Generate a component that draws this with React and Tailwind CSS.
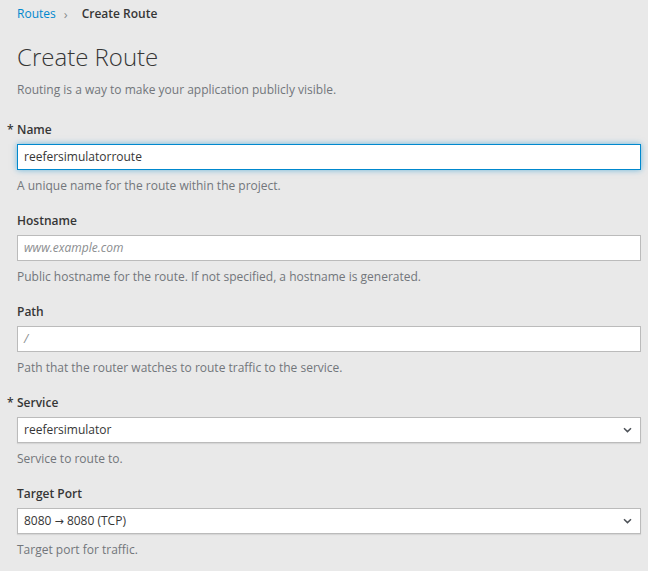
import React from "react";

function Field({ label, required, children, help, first }) {
  return (
    <div className={"flex flex-col " + (first ? "" : "pt-[15px]")}>
      <div className="pt-[2px] h-[20px] leading-[18px] text-[12px] font-semibold text-[#363636] flex">
        {required && <span className="-ml-[10px] w-[10px]">*</span>}
        <span>{label}</span>
      </div>
      <div className="pt-[5px]">{children}</div>
      <div className="pt-[7px] h-[25px] leading-[18px] text-[12px] text-[#72767b]">{help}</div>
    </div>
  );
}

function Chevron() {
  return (
    <svg width="9" height="6" viewBox="0 0 9 6" className="text-[#4d5258]">
      <path d="M1 1.2 L4.5 4.6 L8 1.2" fill="none" stroke="currentColor" strokeWidth="1.5" />
    </svg>
  );
}

export default function App() {
  return (
    <div
      className="min-h-[571px] bg-[#e9e9e9] pl-[17px] pr-[7px] text-[#363636]"
      style={{ fontFamily: '"Open Sans", "Liberation Sans", sans-serif' }}
    >
      <div className="pt-[5px] h-[23px] flex items-center text-[12px] leading-[18px]">
        <span className="text-[#0088ce]">Routes</span>
        <span className="ml-[8px] mr-[14px] text-[#8b8d8f] text-[13px]">›</span>
        <span className="font-semibold text-[#363636]">Create Route</span>
      </div>
      <h1 className="mt-[19px] text-[24px] leading-[30px] font-light text-[#363636]">Create Route</h1>
      <div className="mt-[9px] text-[12px] leading-[18px] text-[#72767b]">
        Routing is a way to make your application publicly visible.
      </div>
      <div className="mt-[20px] flex flex-col">
        <Field label="Name" required first help="A unique name for the route within the project.">
          <div className="h-[26px] bg-white border border-[#0088ce] shadow-[0_0_6px_rgba(0,136,206,0.55)] px-[6px] flex items-center text-[12px] text-[#363636]">
            reefersimulatorroute
          </div>
        </Field>
        <Field label="Hostname" help="Public hostname for the route. If not specified, a hostname is generated.">
          <div className="h-[26px] bg-white border border-[#bbbbbb] px-[6px] flex items-center text-[12px] italic text-[#8b8d8f]">
            www.example.com
          </div>
        </Field>
        <Field label="Path" help="Path that the router watches to route traffic to the service.">
          <div className="h-[26px] bg-white border border-[#bbbbbb] px-[6px] flex items-center text-[12px] italic text-[#8b8d8f]">
            /
          </div>
        </Field>
        <Field label="Service" required help="Service to route to.">
          <div className="h-[26px] bg-white border border-[#bbbbbb] shadow-[0_1px_1px_rgba(3,3,3,0.08)] pl-[6px] pr-[8px] flex items-center justify-between text-[12px] text-[#363636]">
            <span>reefersimulator</span>
            <Chevron />
          </div>
        </Field>
        <Field label="Target Port" help="Target port for traffic.">
          <div className="h-[26px] bg-white border border-[#bbbbbb] shadow-[0_1px_1px_rgba(3,3,3,0.08)] pl-[6px] pr-[8px] flex items-center justify-between text-[12px] text-[#363636]">
            <span>
              8080 <span style={{ fontFamily: '"DejaVu Sans", sans-serif' }} className="text-[11px]">→</span> 8080 (TCP)
            </span>
            <Chevron />
          </div>
        </Field>
      </div>
    </div>
  );
}
